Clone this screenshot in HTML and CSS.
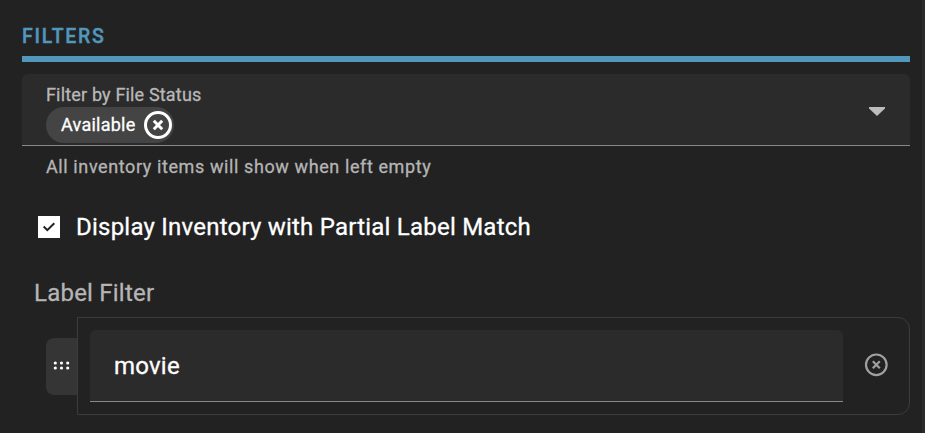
FILE: index.html
```html
<!DOCTYPE html>
<html lang="en">
<head>
<meta charset="utf-8">
<title>Filters</title>
<link rel="stylesheet" href="styles.css">
</head>
<body>
<main class="panel">
  <h2 class="title">FILTERS</h2>
  <div class="select">
    <div class="select-body">
      <div class="select-label">Filter by File Status</div>
      <div class="chip">
        <span>Available</span>
        <svg class="chip-icon" width="28" height="28" viewBox="0 0 28 28"><circle cx="14" cy="14" r="12.5"/><path d="M9.800 9.800l8.400 8.400M18.200 9.800l-8.400 8.400"/></svg>
      </div>
    </div>
    <svg class="caret" width="16" height="9" viewBox="0 0 16 9"><path d="M0 0h16v1.500L8 9 0 1.500z"/></svg>
  </div>
  <div class="hint">All inventory items will show when left empty</div>
  <label class="check">
    <svg width="22" height="22" viewBox="0 0 22 22"><path class="box" d="M0 0h22v22H0z"/><path class="tick" d="M5.700 10.500l3.600 3.700 7-7"/></svg>
    <span>Display Inventory with Partial Label Match</span>
  </label>
  <div class="group-label">Label Filter</div>
  <div class="row">
    <div class="handle">
      <svg width="17" height="9" viewBox="0 0 17 9"><circle cx="2.300" cy="2" r="1.600"/><circle cx="8.500" cy="2" r="1.600"/><circle cx="14.700" cy="2" r="1.600"/><circle cx="2.300" cy="7" r="1.600"/><circle cx="8.500" cy="7" r="1.600"/><circle cx="14.700" cy="7" r="1.600"/></svg>
    </div>
    <div class="item">
      <div class="input">movie</div>
      <svg class="remove" width="24" height="24" viewBox="0 0 24 24"><circle cx="12.300" cy="11.800" r="10.300"/><path d="M8.800 8.300l7 7M15.800 8.300l-7 7"/></svg>
    </div>
  </div>
</main>
</body>
</html>
```
FILE: styles.css
```css
* { box-sizing: border-box; }
body { margin: 0; background: #222; font-family: Roboto, "Liberation Sans", sans-serif; color: #fff; -webkit-text-stroke: .3px currentColor; }
svg { display: block; flex: none; }
.panel { height: 433px; padding: 0 12px 0 22px; border-right: 3px solid #2b2b2b; overflow: hidden; }
.title { height: 62px; margin: 0 0 12px; padding-top: 25px; border-bottom: 6px solid #5197bb; color: #5197bb; font-size: 19.5px; line-height: 23px; font-weight: 500; letter-spacing: 1.75px; -webkit-text-stroke-width: .4px; }
.select { display: flex; justify-content: space-between; height: 72px; padding: 9px 25px 0 24px; background: #2b2b2b; border-bottom: 1px solid #888; border-radius: 6px 6px 0 0; }
.select-label { height: 24px; font-size: 18px; line-height: 24px; color: #b8b8b8; letter-spacing: .17px; }
.chip { display: flex; align-items: center; justify-content: space-between; width: 128px; height: 36px; padding: 0 2px 0 15px; background: #444; border-radius: 18px; font-size: 18px; line-height: 36px; letter-spacing: .25px; }
.chip-icon { fill: none; stroke: #fff; stroke-width: 3; }
.caret { margin-top: 24px; fill: #bcbcbc; }
.hint { height: 42px; padding: 0 24px; font-size: 18px; line-height: 42px; color: #b5b5b5; letter-spacing: .6px; }
.check { display: flex; align-items: center; gap: 16px; height: 44px; margin: 17px 0 0 16px; font-size: 24px; letter-spacing: .225px; }
.box { fill: #fff; }
.tick { fill: none; stroke: #222; stroke-width: 2; }
.group-label { height: 28px; margin: 30px 0 10px 12px; font-size: 24px; line-height: 28px; color: #b5b5b5; letter-spacing: .225px; }
.row { display: flex; align-items: center; margin-left: 24px; }
.handle { display: flex; align-items: center; justify-content: center; width: 31px; height: 57px; padding-bottom: 2px; background: #353535; border-radius: 8px 0 0 8px; fill: #fff; margin-top: 1px; }
.item { display: flex; align-items: center; gap: 21px; flex: 1; height: 98px; padding: 0 21px 0 12px; border: 1px solid #3c3c3c; border-radius: 0 12px 12px 0; }
.input { flex: 1; height: 72px; padding: 0 24px; background: #2b2b2b; border-bottom: 1px solid #888; border-radius: 6px 6px 0 0; font-size: 24px; line-height: 73px; letter-spacing: .225px; }
.remove { margin-bottom: 2px; fill: none; stroke: #a0a0a0; stroke-width: 2.2; }
```
